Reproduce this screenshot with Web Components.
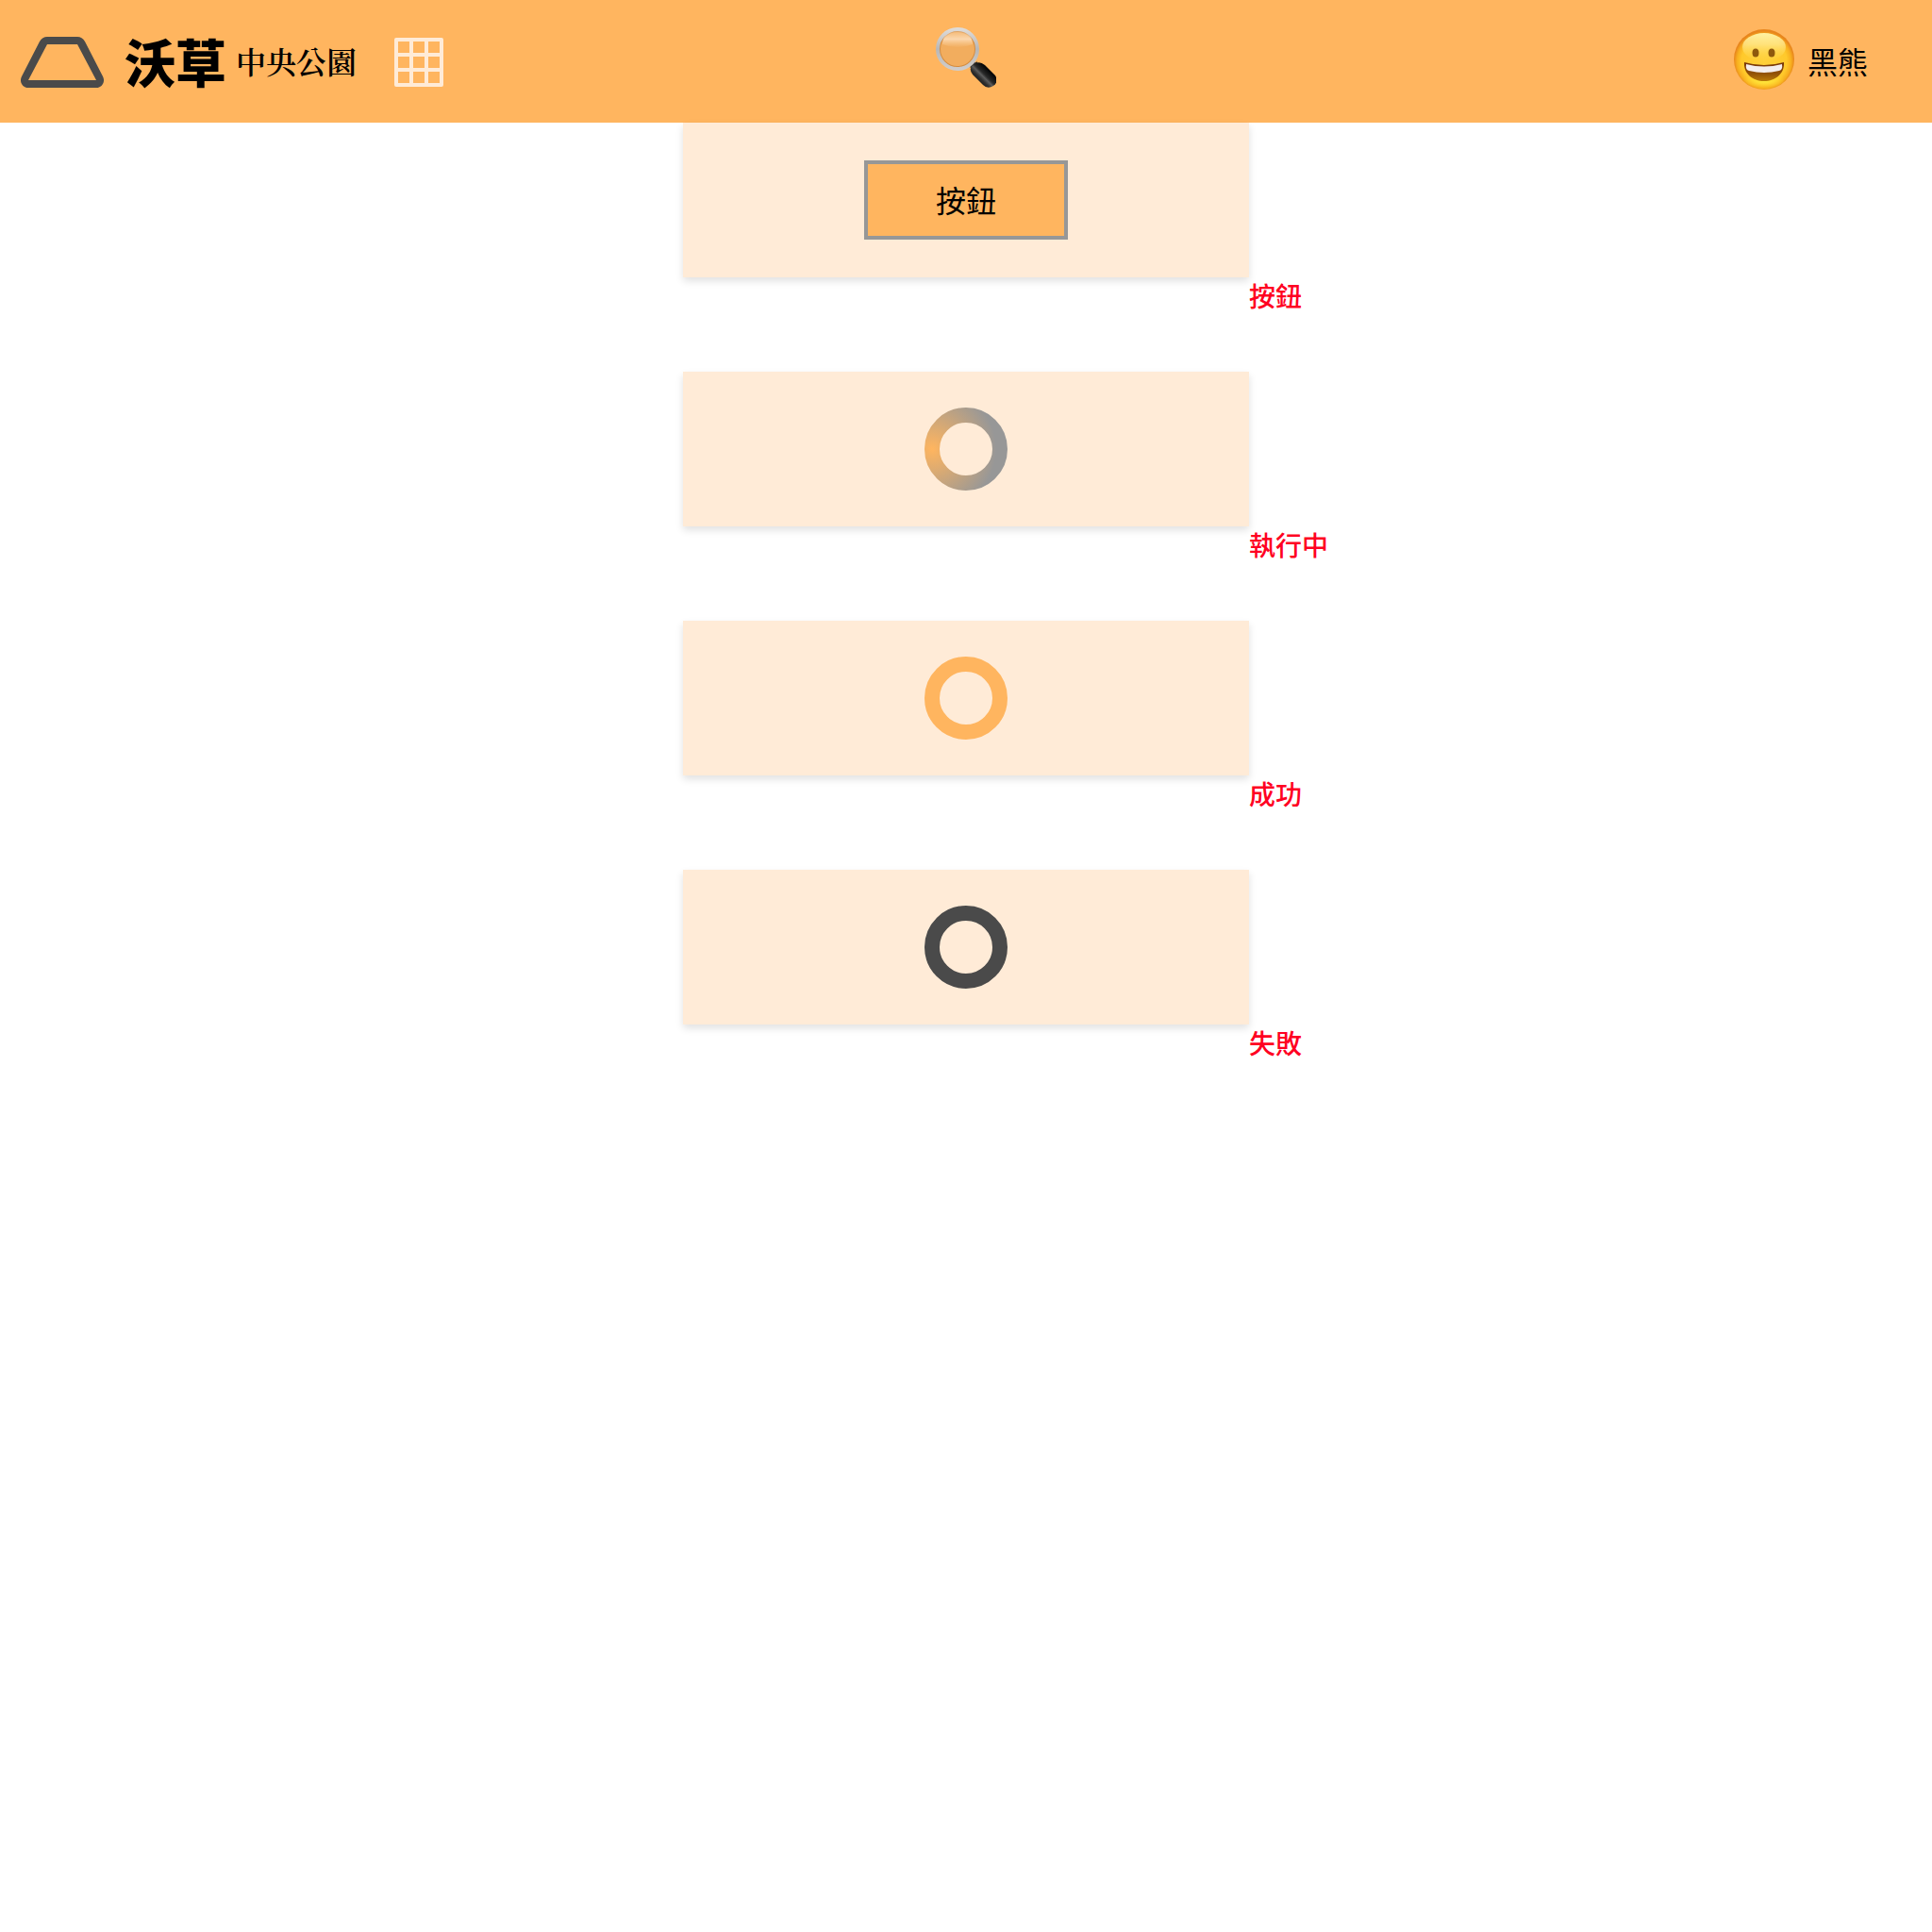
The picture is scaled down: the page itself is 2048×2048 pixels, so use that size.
<!DOCTYPE html>
<html lang="zh-Hant">
<head>
<meta charset="utf-8">
<meta name="viewport" content="width=device-width, initial-scale=1">
<title>沃草 中央公園</title>
<style>
  :root {
    --accent: #ffb55f;
    --accent-soft: #ffebd7;
    --mid: #979797;
    --dark: #4a4a4a;
    --note: #ff0022;
  }
  body {
    margin: 0;
    background: #fff;
    color: #000;
    font-family: "Noto Sans CJK TC", "Noto Sans", sans-serif;
    font-size: 32px;
  }
</style>
</head>
<body>
<app-header>
  <span slot="brand">沃草</span>
  <span slot="place">中央公園</span>
  <span slot="user">黑熊</span>
</app-header>
<main>
  <state-list>
    <state-card note="按鈕"><action-button>按鈕</action-button></state-card>
    <state-card note="執行中"><status-ring state="running"></status-ring></state-card>
    <state-card note="成功"><status-ring state="success"></status-ring></state-card>
    <state-card note="失敗"><status-ring state="failure"></status-ring></state-card>
  </state-list>
</main>

<script>
class BaseElement extends HTMLElement {
  constructor() {
    super();
    this.attachShadow({ mode: "open" });
  }
  connectedCallback() {
    this.shadowRoot.innerHTML = this.render();
  }
}

customElements.define("park-logo", class extends BaseElement {
  render() {
    return `
      <style>:host { display: block; padding-top: 2px; } svg { display: block; width: 88px; height: 54px; }</style>
      <svg viewBox="0 0 88 54" aria-hidden="true">
        <path fill="#4a4a4a" fill-rule="evenodd" d="M28 0H60Q65 0 68 5L87 42C90 48 86 54 80 54H8C2 54-2 48 1 42L20 5Q23 0 28 0ZM28 8L8 46H80L60 8Z"/>
      </svg>`;
  }
});

customElements.define("grid-icon", class extends BaseElement {
  render() {
    return `
      <style>:host { display: block; padding-top: 2px; } svg { display: block; width: 52px; height: 52px; }</style>
      <svg viewBox="0 0 52 52" aria-hidden="true">
        <path fill="#ffebd7" fill-rule="evenodd" d="M2 0H50Q52 0 52 2V50Q52 52 50 52H2Q0 52 0 50V2Q0 0 2 0ZM4 4V16H16V4ZM20 4V16H32V4ZM36 4V16H48V4ZM4 20V32H16V20ZM20 20V32H32V20ZM36 20V32H48V20ZM4 36V48H16V36ZM20 36V48H32V36ZM36 36V48H48V36Z"/>
      </svg>`;
  }
});

customElements.define("search-icon", class extends BaseElement {
  render() {
    return `
      <style>:host { display: block; } svg { display: block; width: 64px; height: 64px; }</style>
      <svg viewBox="0 0 64 64" aria-hidden="true">
        <defs>
          <linearGradient id="rim" x1="0" y1="0" x2="0" y2="1">
            <stop offset="0" stop-color="#dedbd8"/><stop offset=".5" stop-color="#b9b7b6"/><stop offset="1" stop-color="#cfccca"/>
          </linearGradient>
          <linearGradient id="shine" x1="0" y1="0" x2="0" y2="1">
            <stop offset="0" stop-color="#ffe6c8" stop-opacity=".1"/><stop offset=".55" stop-color="#ffe9d0" stop-opacity=".7"/><stop offset="1" stop-color="#ffd9aa" stop-opacity=".05"/>
          </linearGradient>
          <linearGradient id="grip" gradientUnits="userSpaceOnUse" x1="42" y1="56" x2="54" y2="44">
            <stop offset="0" stop-color="#161616"/><stop offset=".3" stop-color="#303030"/><stop offset=".5" stop-color="#5b5b5b"/><stop offset=".65" stop-color="#292929"/><stop offset="1" stop-color="#080808"/>
          </linearGradient>
        </defs>
        <path d="M37 37L45 46" stroke="#5c5650" stroke-width="7"/>
        <path d="M37 43L44 37" stroke="#292521" stroke-width="2"/>
        <path d="M38 41Q35 45 39 50L50 61Q55 66 61 62T63 51L52 40Q47 36 43 38Z" fill="url(#grip)"/>
        <circle cx="23" cy="23" r="19" fill="#f2ad5e"/>
        <circle cx="23" cy="23" r="19" fill="none" stroke="#d58c3f" stroke-width="2"/>
        <path d="M7 18A16 16 0 0 1 39 18Q23 24 7 18Z" fill="url(#shine)"/>
        <circle cx="23" cy="23" r="21" fill="none" stroke="url(#rim)" stroke-width="4"/>
      </svg>`;
  }
});

customElements.define("grin-avatar", class extends BaseElement {
  render() {
    return `
      <style>:host { display: block; } svg { display: block; width: 64px; height: 68px; }</style>
      <svg viewBox="0 0 64 68" aria-hidden="true">
        <defs>
          <radialGradient id="face" cx=".5" cy=".53" r=".5">
            <stop offset="0" stop-color="#ffd03a"/><stop offset=".75" stop-color="#ffc92b"/><stop offset=".89" stop-color="#f8b01f"/><stop offset="1" stop-color="#e8861c"/>
          </radialGradient>
          <linearGradient id="gloss" x1="0" y1="0" x2="0" y2="1">
            <stop offset="0" stop-color="#fff3a4"/><stop offset=".4" stop-color="#ffea94" stop-opacity=".75"/><stop offset="1" stop-color="#ffdc50" stop-opacity="0"/>
          </linearGradient>
          <radialGradient id="glow"><stop offset="0" stop-color="#fff043"/><stop offset="1" stop-color="#ffe030" stop-opacity="0"/></radialGradient>
          <linearGradient id="mouth" x1="0" y1="0" x2="0" y2="1">
            <stop offset="0" stop-color="#753309"/><stop offset=".6" stop-color="#925207"/><stop offset="1" stop-color="#ba7a08"/>
          </linearGradient>
        </defs>
        <circle cx="32" cy="32" r="32" fill="url(#face)"/>
        <ellipse cx="32" cy="54" rx="22" ry="8" fill="url(#glow)"/>
        <ellipse cx="32" cy="19" rx="23" ry="15" fill="url(#gloss)"/>
        <ellipse cx="23" cy="25" rx="3.5" ry="4.5" fill="#8e590d"/>
        <ellipse cx="40" cy="25" rx="3.5" ry="4.5" fill="#8e590d"/>
        <path d="M11 35Q32 41 53 35C54 47 44 55 32 55S10 47 11 35Z" fill="url(#mouth)"/>
        <path d="M13 37Q32 42 51 37Q52 43 48 44Q32 48 16 44Q12 43 13 37Z" fill="#f4eeee"/>
      </svg>`;
  }
});

customElements.define("app-header", class extends BaseElement {
  render() {
    return `
      <style>
        :host { display: block; background: var(--accent); }
        header {
          display: grid; grid-template-columns: 1fr auto 1fr; align-items: center;
          box-sizing: border-box; min-height: 130px; padding: 0 68px 0 22px;
        }
        nav, .home { display: flex; align-items: center; }
        nav { gap: 40px; }
        .home { color: inherit; text-decoration: none; }
        .brand { margin-left: 22px; font-size: 54px; line-height: 64px; font-weight: 900; white-space: nowrap; }
        .place { margin-left: 10px; padding-bottom: 2px; font-family: "Noto Serif CJK TC", "Noto Sans CJK TC", serif; font-weight: 600; line-height: 48px; white-space: nowrap; }
        button { margin: 0; padding: 0; border: 0; background: none; color: inherit; font: inherit; cursor: pointer; }
        .search { padding-bottom: 8px; margin-left: 46px; }
        .user { justify-self: end; display: flex; align-items: center; gap: 14px; line-height: 48px; white-space: nowrap; }
        .name { padding-bottom: 2px; }
      </style>
      <header>
        <nav aria-label="主選單">
          <a class="home" href="#">
            <park-logo></park-logo>
            <span class="brand"><slot name="brand"></slot></span>
            <span class="place"><slot name="place"></slot></span>
          </a>
          <button type="button" aria-label="選單"><grid-icon></grid-icon></button>
        </nav>
        <button class="search" type="button" aria-label="搜尋"><search-icon></search-icon></button>
        <button class="user" type="button"><grin-avatar></grin-avatar><span class="name"><slot name="user"></slot></span></button>
      </header>`;
  }
});

customElements.define("state-list", class extends BaseElement {
  render() {
    return `
      <style>:host { display: flex; flex-direction: column; gap: 62px; padding-bottom: 62px; }</style>
      <slot></slot>`;
  }
});

customElements.define("state-card", class extends BaseElement {
  render() {
    return `
      <style>
        :host { display: grid; grid-template-columns: 1fr minmax(0, 600px) 1fr; }
        .card {
          grid-column: 2; display: flex; align-items: center; justify-content: center;
          box-sizing: border-box; min-height: 164px; padding: 38px;
          background: var(--accent-soft); box-shadow: 0 4px 8px rgba(0, 0, 0, .12);
        }
        .note { grid-column: 3; grid-row: 2; color: var(--note); font-size: 28px; line-height: 38px; font-weight: 500; }
      </style>
      <div class="card"><slot></slot></div>
      <div class="note">${this.getAttribute("note")}</div>`;
  }
});

customElements.define("action-button", class extends BaseElement {
  render() {
    return `
      <style>
        :host { display: block; }
        button {
          display: block; margin: 0; padding: 13px 72px 15px; border: 4px solid var(--mid); border-radius: 0;
          background: var(--accent); color: #000; font: inherit; line-height: 48px; cursor: pointer;
        }
      </style>
      <button type="button"><slot></slot></button>`;
  }
});

customElements.define("status-ring", class extends BaseElement {
  render() {
    const paint = { running: "url(#sweep)", success: "#ffb55f", failure: "#4a4a4a" }[this.getAttribute("state")];
    return `
      <style>:host { display: block; } svg { display: block; width: 88px; height: 88px; }</style>
      <svg viewBox="0 0 88 88" aria-hidden="true">
        <defs>
          <radialGradient id="sweep" gradientUnits="userSpaceOnUse" cx="8" cy="44" r="68">
            <stop offset="0" stop-color="#ffb55f"/><stop offset="1" stop-color="#979797"/>
          </radialGradient>
        </defs>
        <circle cx="44" cy="44" r="36" fill="none" stroke="${paint}" stroke-width="16"/>
      </svg>`;
  }
});
</script>
</body>
</html>
